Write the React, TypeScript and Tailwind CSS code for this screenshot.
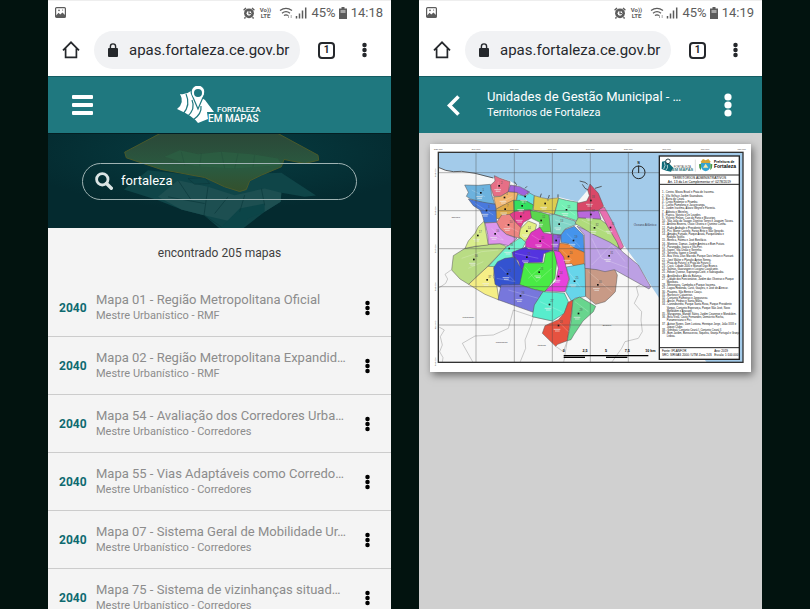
import type { ReactNode } from "react";

type Region = { fill: string; points: string };

const regions: Region[] = [
  { fill: "#b9dc84", points: "85,362 120,340 190,328 225,326 245,335 180,402 131,448 105,432 80,405" },
  { fill: "#d9ee8c", points: "120,340 130,318 150,295 160,275 178,258 182,285 190,330 150,334" },
  { fill: "#f5ee86", points: "131,448 180,402 225,362 228,384 210,398 205,425 215,450 222,495 180,478" },
  { fill: "#72f2cf", points: "190,394 245,335 290,305 302,322 290,345 262,352 262,372 230,378 210,395" },
  { fill: "#6cb2de", points: "119,150 160,151 196,148 200,178 209,208 185,206 165,200 137,192 124,184 130,172" },
  { fill: "#e66f86", points: "198,160 197,150 210,138 208,122 225,130 255,140 250,172 226,184 206,184" },
  { fill: "#4979dd", points: "130,192 165,200 212,208 215,262 178,263 172,240 165,225 145,212" },
  { fill: "#f2b56e", points: "206,186 228,184 250,170 279,171 272,202 232,214 214,222" },
  { fill: "#a062dd", points: "256,150 284,155 314,171 296,183 274,172 250,170" },
  { fill: "#62dfe4", points: "278,178 300,184 314,174 328,182 325,210 300,196 274,200" },
  { fill: "#ddcd50", points: "328,182 350,188 370,192 401,188 388,238 325,225" },
  { fill: "#dfab48", points: "214,222 232,212 266,195 268,230 242,248 215,251" },
  { fill: "#34e060", points: "266,196 300,196 325,210 322,226 290,224 267,230" },
  { fill: "#e43c8d", points: "254,238 268,230 316,224 320,248 296,262 286,280 268,258" },
  { fill: "#ee8582", points: "215,262 230,240 254,238 268,258 290,280 290,310 268,306 244,298 224,280" },
  { fill: "#74f0b5", points: "401,190 425,196 459,202 457,258 425,247 388,238" },
  { fill: "#5ad64e", points: "316,226 348,232 375,240 380,290 352,292 342,278 344,262 320,250" },
  { fill: "#82d6c8", points: "372,240 388,238 450,258 455,268 420,282 408,300 378,296" },
  { fill: "#e2ef82", points: "286,282 310,258 335,268 330,288 312,308 298,318 282,304" },
  { fill: "#db36c0", points: "302,320 318,292 345,277 356,294 382,298 384,346 340,344 302,336" },
  { fill: "#dd96ec", points: "180,264 215,262 224,280 244,298 276,310 250,332 225,326 190,328 188,298" },
  { fill: "#9058dc", points: "384,298 408,300 404,326 400,350 386,346" },
  { fill: "#4594ec", points: "408,300 420,284 448,274 475,300 478,352 444,338 432,326 408,322" },
  { fill: "#ee8538", points: "404,324 432,328 450,340 478,352 478,390 448,396 440,386 404,388 400,352" },
  { fill: "#5434df", points: "262,352 302,336 310,342 384,346 356,356 352,382 300,384 290,410 280,378 265,366" },
  { fill: "#3453d0", points: "206,398 218,380 240,370 270,366 282,390 298,412 286,448 280,475 240,465 210,448" },
  { fill: "#49eb45", points: "298,384 356,384 362,354 392,346 396,372 390,430 360,470 322,462 284,449" },
  { fill: "#e742dc", points: "386,346 404,350 416,366 432,432 420,470 360,468 392,440 400,400" },
  { fill: "#67d5ea", points: "424,396 478,386 482,398 482,484 450,490 440,500 422,470 434,432" },
  { fill: "#7777dc", points: "228,450 284,449 322,462 354,470 330,510 325,532 219,494" },
  { fill: "#58edcd", points: "354,470 418,474 430,500 418,535 382,558 322,545 328,510" },
  { fill: "#e65240", points: "430,502 444,495 440,532 427,617 398,628 392,634 352,595 360,572 400,554 418,534" },
  { fill: "#68d58e", points: "444,495 464,486 512,514 505,530 474,558 446,600 438,614 427,617 438,560" },
  { fill: "#c89a86", points: "480,397 516,404 554,398 570,405 577,420 571,470 560,482 540,500 512,508 482,484" },
  { fill: "#bca0e4", points: "456,274 482,284 520,290 560,310 592,350 640,390 677,455 672,462 568,404 540,410 516,404 480,400 478,300" },
  { fill: "#b0dc7c", points: "460,248 525,252 545,268 574,302 582,340 555,322 530,310 500,296 450,265" },
  { fill: "#b968dc", points: "457,228 520,226 528,252 460,248" },
  { fill: "#ea6fb0", points: "520,222 538,216 562,260 596,335 586,345 575,320 548,275" },
  { fill: "#d94868", points: "457,205 485,198 493,182 488,165 495,147 520,175 536,214 520,226 457,229" },
];

const markers = "167,173 222,152 184,226 238,187 300,184 360,205 240,222 291,212 287,244 250,269 424,224 348,256 402,267 305,288 345,318 210,296 158,301 393,316 445,316 430,364 305,366 247,416 342,411 400,424 448,438 286,482 373,508 400,571 460,535 518,449 552,362 508,278 497,196 497,238 556,277 146,373 186,434 252,340"
  .split(" ")
  .map((pair) => pair.split(",").map(Number));

const legend = [
  "1 - Centro, Moura Brasil e Praia de Iracema.",
  "2 - Vila Velha e Jardim Guanabara.",
  "3 - Barra do Ceará.",
  "4 - Cristo Redentor e Pirambu.",
  "5 - Carlito Pamplona e Jacarecanga.",
  "6 - Jardim Iracema, Álvaro Weyne e Floresta.",
  "7 - Aldeota e Meireles.",
  "8 - Papicu, Varjota e De Lourdes.",
  "9 - Vicente Pinzon, Cais do Porto e Mucuripe.",
  "10 - São João do Tauape, Dionísio Torres e Joaquim Távora.",
  "11 - Antônio Bezerra, Olavo Oliveira e Quintino Cunha.",
  "12 - Padre Andrade e Presidente Kennedy.",
  "13 - Pici, Monte Castelo, Farias Brito e São Gerardo.",
  "14 - Amadeu Furtado, Parque Araxá, Parquelândia e",
  "      Rodolfo Teófilo.",
  "15 - Benfica, Fátima e José Bonifácio.",
  "16 - Montese, Damas, Jardim América e Bom Futuro.",
  "17 - Parangaba, Itaoca e Vila Peri.",
  "18 - Itaperi, Vila União e Serrinha.",
  "19 - Serrinha, Itaperi e Dendê.",
  "20 - Boa Vista, Dias Macedo, Parque Dois Irmãos e Passaré.",
  "21 - José Walter e Planalto Ayrton Senna.",
  "22 - Praia do Futuro I e Praia do Futuro II.",
  "23 - Cocó, Cidade 2000 e Manuel Dias Branco.",
  "24 - Salinas, Guararapes e Luciano Cavalcante.",
  "25 - Edson Queiroz, Sapiranga/Coité, e Sabiaguaba.",
  "26 - Aerolândia e Alto da Balança.",
  "27 - Cidade dos Funcionários, Jardim das Oliveiras e Parque",
  "      Manibura.",
  "28 - Messejana, Cambeba e Parque Iracema.",
  "29 - Lagoa Redonda, Curió, Guajeru, e José de Alencar.",
  "30 - Paupina, São Bento e Coaçu.",
  "31 - Barroso e Cajazeiras.",
  "32 - Conjunto Palmeiras e Jangurussu.",
  "33 - Ancuri, Pedras e Santa Maria.",
  "34 - Canindezinho, Parque Santa Rosa, Parque Presidente",
  "      Vargas, Conjunto Esperança, Parque São José, Novo",
  "      Mondubim e Aracapé.",
  "35 - Maraponga, Manoel Sátiro, Jardim Cearense e Mondubim.",
  "36 - Bela Vista, Couto Fernandes, Demócrito Rocha,",
  "      Panamericano e Pici.",
  "37 - Autran Nunes, Dom Lustosa, Henrique Jorge, João XXIII e",
  "      Jóquei Clube.",
  "38 - Genibaú, Conjunto Ceará I, Conjunto Ceará II.",
  "39 - Bom Jardim, Bonsucesso, Siqueira, Granja Portugal e Granja",
  "      Lisboa.",
];

const maps = [
  ["Mapa 01 - Região Metropolitana Oficial", "Mestre Urbanístico - RMF"],
  ["Mapa 02 - Região Metropolitana Expandid…", "Mestre Urbanístico - RMF"],
  ["Mapa 54 - Avaliação dos Corredores Urba…", "Mestre Urbanístico - Corredores"],
  ["Mapa 55 - Vias Adaptáveis como Corredo…", "Mestre Urbanístico - Corredores"],
  ["Mapa 07 - Sistema Geral de Mobilidade Ur…", "Mestre Urbanístico - Corredores"],
  ["Mapa 75 - Sistema de vizinhanças situad…", "Mestre Urbanístico - Corredores"],
];

function Dots({ className }: { className: string }) {
  return (
    <svg viewBox="0 0 8 24" className={className} fill="currentColor" aria-hidden="true">
      <circle cx="4" cy="4" r="3.6" />
      <circle cx="4" cy="12" r="3.6" />
      <circle cx="4" cy="20" r="3.6" />
    </svg>
  );
}

function StatusBar({ time }: { time: string }) {
  return (
    <div className="flex h-6 shrink-0 items-center border-t border-[#eeeeee] pr-2 pl-[7px] text-[13px] text-[#5c5c5c]">
      <svg viewBox="0 0 11 11" className="size-[11px]" aria-hidden="true">
        <rect x="0.6" y="0.6" width="9.8" height="9.8" rx="1" fill="none" stroke="#5c5c5c" strokeWidth="1.2" />
        <path d="M1 8.5 3.6 5.8 5.2 7.4 7.5 5.4 10 8v2H1Z" fill="#5c5c5c" />
        <circle cx="4" cy="3.4" r="0.8" fill="#5c5c5c" />
        <circle cx="7.6" cy="3" r="0.6" fill="#5c5c5c" />
      </svg>
      <div className="ml-auto flex items-center gap-1">
        <svg viewBox="0 0 12 12" className="size-3" aria-hidden="true">
          <circle cx="6" cy="6.3" r="4.9" fill="#5c5c5c" />
          <path d="M.6 3.2 3 1M11.4 3.2 9 1M2.5 10.2 1.4 11.5M9.5 10.2l1.1 1.3" stroke="#5c5c5c" strokeWidth="1.4" />
          <circle cx="6" cy="6.3" r="2.4" fill="#fff" />
          <path d="M6 4v2.600h2.200" stroke="#5c5c5c" strokeWidth="1.2" fill="none" />
        </svg>
        <span className="flex w-3 flex-col items-center text-[6px] leading-[6px] font-bold">
          <span>Vo))</span>
          <span>LTE</span>
        </span>
        <svg viewBox="0 0 28 14" className="ml-1 h-[14px] w-7" fill="none" stroke="#5c5c5c" aria-hidden="true">
          <path d="M1 4.600Q7 .2 13 4.600M3 7.200q4-3 8 0M5 9.600q2-1.600 4 0" strokeWidth="1.3" />
          <path d="M9.500 9v3M12.200 9v3" stroke="#aaa" />
          <path d="M17.500 10v2.500M20.500 7.500v5M23.500 4.500v8M26.700 1.500v11" strokeWidth="1.500" />
        </svg>
        <span className="-mr-px">45%</span>
        <svg viewBox="0 0 8 12" className="h-3 w-2" aria-hidden="true">
          <path d="M2.500 0h3v1.500H8V12H0V1.500h2.500Z" fill="#5c5c5c" />
          <path d="M1.500 3h5v3h-5Z" fill="#a8a8a8" />
        </svg>
        <span>{time}</span>
      </div>
    </div>
  );
}

function BrowserBar() {
  return (
    <div className="flex h-[52px] shrink-0 items-center bg-white pr-[23px] pl-[14px] text-[#25282c]">
      <button type="button" aria-label="Início">
        <svg viewBox="0 0 18 18" className="size-[18px]" fill="none" stroke="currentColor" strokeWidth="1.7" aria-hidden="true">
          <path d="M1 9.300 9 1.300l8 8M3.600 7.500v8.900h10.800V7.500" />
        </svg>
      </button>
      <label className="ml-[14px] flex h-[38px] min-w-0 flex-1 items-center rounded-full bg-[#f1f2f4] pl-[14px]">
        <svg viewBox="0 0 10 14" className="h-[14px] w-[10px] shrink-0" aria-hidden="true">
          <rect y="5" width="10" height="9" rx="1" fill="currentColor" />
          <path d="M2.400 5.500V3.500a2.600 2.600 0 0 1 5.200 0v2" fill="none" stroke="currentColor" strokeWidth="1.4" />
        </svg>
        <input
          aria-label="Endereço"
          defaultValue="apas.fortaleza.ce.gov.br"
          className="ml-[11px] w-full min-w-0 bg-transparent text-[15px] outline-none"
        />
      </label>
      <button type="button" aria-label="Abas" className="ml-[18px] flex size-[17px] items-center justify-center rounded-[4px] border-2 border-current text-[10px] leading-none font-bold">
        1
      </button>
      <button type="button" aria-label="Menu do navegador" className="ml-[25px] flex w-2 justify-center">
        <Dots className="h-4 w-[5px]" />
      </button>
    </div>
  );
}

function Phone({ time, header, children }: { time: string; header: ReactNode; children: ReactNode }) {
  return (
    <section className="flex min-w-0 flex-1 flex-col overflow-hidden bg-white">
      <StatusBar time={time} />
      <BrowserBar />
      <header className="flex h-[57px] shrink-0 items-center border-t border-[#145c62] bg-[#1f787f] text-white">{header}</header>
      {children}
    </section>
  );
}

function Logo() {
  return (
    <svg viewBox="0 0 86 38" className="h-[38px] w-[86px]" role="img" aria-label="Fortaleza em Mapas">
      <path d="M3 8Q9 9 14 5L28 14 37 26 30 26 31 33 21 37Q16 30 0 23Q8 17 3 8Z" fill="#fff" />
      <path d="M9 8q5 11-3 20M15 14q4 9-5 17M24 20q1 8-8 14" fill="none" stroke="#1f787f" strokeWidth="1.2" />
      <path d="M21 23 15 9a6.800 6.800 0 1 1 12 0Z" fill="#fff" stroke="#1f787f" strokeWidth="1.2" />
      <circle cx="21" cy="7" r="5" fill="#1f787f" stroke="#fff" strokeWidth="2" />
      <text x="40" y="26" fontSize="8" fontFamily="Roboto, sans-serif" fontWeight="500" fill="#fff">FORTALEZA</text>
      <text x="31" y="36" fontSize="10" fontFamily="Roboto, sans-serif" fontWeight="500" fill="#fff">EM MAPAS</text>
    </svg>
  );
}

function SearchBackdrop() {
  return (
    <svg viewBox="0 0 1029 285" preserveAspectRatio="xMidYMid slice" className="absolute inset-0 size-full" aria-hidden="true">
      <defs>
        <radialGradient id="glow" cx="50%" cy="20%" r="60%">
          <stop offset="0" stopColor="#073d42" />
          <stop offset="1" stopColor="#042a2f" />
        </radialGradient>
        <linearGradient id="olive" x1="0" y1="0" x2="0" y2="1">
          <stop offset="0" stopColor="#2b4838" />
          <stop offset="0.6" stopColor="#2a5a40" />
          <stop offset="1" stopColor="#34502c" />
        </linearGradient>
      </defs>
      <rect width="1029" height="285" fill="url(#glow)" />
      <path d="M228 168 300 110 480 130 640 120 700 118 804 186 770 190 700 178 698 205 650 235 585 285H515L468 245 400 228 330 200Z" fill="#0f4548" />
      <path d="M330 190 390 140 480 160 560 185 650 165 700 178 698 205 650 235 600 250 540 262 468 245 400 228Z" fill="#1d4f51" />
      <path d="M540 260 575 225 650 210 650 235 600 255 585 285H515Z" fill="#0c4548" />
      <path d="M420 135 470 132 485 150 440 152ZM390 140 430 200M480 160 468 245 520 280M540 190 500 240M590 185 575 235M640 165 650 215M360 190 470 210" fill="none" stroke="#0a383b" strokeWidth="2" />
      <path d="M336 0 230 56 235 73 340 108 470 132 530 160 575 174 595 168 605 142 640 125 700 100 708 78 770 90 812 80 810 65 690 0Z" fill="url(#olive)" stroke="#4a5a2a" strokeWidth="3" />
      <path d="M350 70 395 50 450 62 520 55 610 62 690 75 700 95 560 105 440 98Z" fill="#2b6545" opacity=".5" />
      <path d="M400 55 410 95M460 60 455 98M520 55 530 104M570 60 560 105M620 65 615 100" stroke="#234d3b" strokeWidth="2" opacity=".6" />
    </svg>
  );
}

function ListScreen() {
  return (
    <>
      <div className="relative flex h-[95px] shrink-0 items-center justify-center border-t border-[#041f23] bg-[#042a2f]">
        <SearchBackdrop />
        <label className="relative mx-[34px] flex h-[37px] w-full items-center rounded-full border border-[#9fb3b3] pl-3">
          <svg viewBox="0 0 18 18" className="size-[18px] shrink-0" fill="none" stroke="#dbe4e4" aria-hidden="true">
            <circle cx="7.300" cy="7.300" r="5.700" strokeWidth="2.800" />
            <path d="m11.500 11.500 4.800 4.800" strokeWidth="3.400" strokeLinecap="round" />
          </svg>
          <input aria-label="Buscar mapas" defaultValue="fortaleza" className="ml-2 w-full min-w-0 bg-transparent text-[13px] text-white outline-none" />
        </label>
      </div>
      <div className="flex-1 bg-[#f4f4f4]">
        <p className="py-[17px] text-center text-[12px] leading-[17px] text-[#404040]">encontrado 205 mapas</p>
        <ul>
          {maps.map(([title, group]) => (
            <li key={title} className="flex h-[58px] items-center border-b border-[#cccccc] pr-3 pl-[11px]">
              <span className="w-[37px] shrink-0 text-[12px] font-bold text-[#0e6a70]">2040</span>
              <a href="#mapa" className="min-w-0 flex-1 text-[#8c8c8c]">
                <span className="block truncate text-[13px] leading-4">{title}</span>
                <span className="block truncate text-[11px] leading-4">{group}</span>
              </a>
              <button type="button" aria-label={`Opções de ${title}`} className="flex w-6 justify-center text-black">
                <Dots className="h-4 w-[5px]" />
              </button>
            </li>
          ))}
        </ul>
      </div>
    </>
  );
}

function MapSheet() {
  return (
    <svg viewBox="15 27 963 684" className="block h-auto w-full bg-white shadow-[2px_3px_8px_rgba(0,0,0,0.5)]" fontFamily="'Liberation Sans', sans-serif" role="img" aria-label="Mapa das Unidades de Gestão Municipal">
      <rect x="15" y="27" width="963" height="684" fill="#fff" />
      <rect x="40" y="52" width="914" height="630" fill="#f7f7f7" />
      <path d="M40 52V97L62 106 85 110 110 109 150 115 180 124 205 129 215 125 255 138 284 155 325 182 370 192 401 186 458 200 488 165 495 147 538 214 596 330 640 390 682 458 710 500 770 585 845 682H954V52Z" fill="#a3cbea" />
      <path d="M40 97 62 106 85 110 110 109 150 115 205 129M488 148 480 142 464 138M490 165 480 160 472 148M510 160 530 154M268 140l6 8-2 8M300 160l6-6M345 188l4-12M370 190l3-10M399 188v-10" fill="none" stroke="#444" strokeWidth="2.500" />
      <g fill="none" stroke="#999" strokeWidth="1.500">
        <path d="M78 405 60 418 68 432 62 445 40 460M40 575 58 585 46 605 52 630 44 650 54 668 52 682M144 682 112 625 150 603 205 600 250 580 265 525 325 545 318 570 300 615 302 640 285 682M322 545 382 558 M392 634 415 650 427 617 416 682" />
        <path d="M677 455 650 447 634 456 640 480 628 505 650 530 648 555 652 590 640 610 600 620 590 640 560 682" />
      </g>
      <g stroke="#555" strokeWidth="1.500" strokeLinejoin="round">
        {regions.map((r) => (
          <polygon key={r.points} points={r.points} fill={r.fill} />
        ))}
      </g>
      <g fill="none" stroke="#fff" strokeWidth="1" opacity=".6">
        <path d="M140 165 180 185M220 140 215 170M150 205 205 240M230 200 262 185M240 270 280 290M200 280 235 315 215 310M110 370 170 350 220 345M130 400 175 380M225 395 270 440 215 430M300 395 335 440 380 400M310 430 350 395M410 345 440 375M430 410 470 460M250 465 340 490M345 500 410 530M400 560 430 590M450 500 490 530M490 410 560 470M500 310 530 370 610 400M500 390 560 330 600 380M470 255 560 300M410 210 450 240M390 255 440 270M425 295 465 335M320 300 375 335M270 355 340 370" />
      </g>
      <g fontSize="8" textAnchor="middle">
        {markers.map(([x, y], i) => (
          <g key={`${x}-${y}`}>
            <rect x={x - 2} y={y - 2} width="5" height="5" fill="#111" />
            <text x={x + 8} y={y - 6} fill="#555">{i + 1}</text>
            <path d={`M${x - 14} ${y + 12}h20M${x - 10} ${y + 17}h14`} stroke="#eee" strokeWidth="2.500" opacity=".8" />
          </g>
        ))}
      </g>
      <g stroke="#4a4a4a" strokeWidth="1.500" opacity=".8">
        <path d="M153 52V682M268 52V682M382 52V682M496 52V682M610 52V682M40 113H702M40 227H702M40 341H702M40 455H702M40 570H702" />
      </g>
      <rect x="40" y="52" width="914" height="630" fill="none" stroke="#333" strokeWidth="4" />
      <g fontSize="7" fill="#333" textAnchor="middle">
        {[40, 153, 268, 382, 496, 610, 725, 840, 950].map((x, i) => (
          <text key={x} x={x} y="46">{`${53 + i}0.000`}</text>
        ))}
        {[113, 227, 341, 455, 570, 680].map((y, i) => (
          <text key={y} x="34" y={y} transform={`rotate(-90 34 ${y})`}>{`${959 - i}.000`}</text>
        ))}
        <text x="92" y="250">Caucaia</text>
        <text x="130" y="549">Maracanaú</text>
        <text x="230" y="624">Maracanaú</text>
        <text x="350" y="634">Itaitinga</text>
        <text x="546" y="574">Eusébio</text>
      </g>
      <text x="660" y="273" fontSize="9" fill="#445" textAnchor="middle">Oceano Atlântico</text>
      <circle cx="641" cy="112" r="19" fill="none" stroke="#222" strokeWidth="3" />
      <path d="M641 92v22" stroke="#222" strokeWidth="3" />
      <text x="641" y="88" fontSize="9" fontWeight="bold" textAnchor="middle">N</text>
      <path d="M416 662H670M416 667h64M543 667h64" stroke="#000" strokeWidth="4" />
      <g fontSize="11" fontWeight="bold" textAnchor="middle">
        <text x="416" y="652">0</text>
        <text x="480" y="652">2,5</text>
        <text x="543" y="652">5</text>
        <text x="607" y="652">7,5</text>
        <text x="676" y="652">10 km</text>
      </g>
      <rect x="703" y="63" width="240" height="610" fill="#fff" stroke="#222" strokeWidth="4" />
      <path d="M703 120H943M703 148H943M703 638H943" stroke="#222" strokeWidth="3" />
      <path d="M811 74v36" stroke="#ccc" strokeWidth="2" />
      <path d="M711 80 724 77 745 98 738 110 724 107 710 102Z" fill="#0e6a78" />
      <circle cx="729" cy="79" r="7" fill="#fff" stroke="#27454c" strokeWidth="3" />
      <path d="M718 82q5 9-2 20M727 90q3 9-4 15" stroke="#fff" strokeWidth="2" fill="none" />
      <text x="746" y="98" fontSize="9" fill="#555">FORTALEZA</text>
      <text x="741" y="109" fontSize="12" fontWeight="bold" fill="#34787e">EM MAPAS</text>
      <path d="M827 80 834 72 842 76 850 72 857 80 853 86H831Z" fill="#d6a638" />
      <path d="M828 84h28v12q-4 11-14 13-10-2-14-13Z" fill="#35a3d0" />
      <path d="M822 88l6-2v20q-7-6-6-18ZM862 88l-6-2v20q7-6 6-18Z" fill="#4a9a48" />
      <path d="M834 98l8-12 8 12Z" fill="#f4e7a8" />
      <text x="867" y="83" fontSize="10" fontWeight="bold">Prefeitura de</text>
      <text x="867" y="98" fontSize="15" fontWeight="bold">Fortaleza</text>
      <g fontSize="10" textAnchor="middle">
        <text x="823" y="131">TERRITÓRIOS ADMINISTRATIVOS</text>
        <text x="823" y="143">Art. 13 da Lei Complementar nº 0278/2019</text>
      </g>
      <g fontSize="8" fill="#111">
        {legend.map((line, i) => (
          <text key={line} x={line.startsWith(" ") ? 725 : 711} y={Math.round(175 + i * 9.6)}>{line.trim()}</text>
        ))}
      </g>
      <g fontSize="9">
        <text x="711" y="650">Fonte: IPLANFOR</text>
        <text x="868" y="650">Ano: 2019</text>
        <text x="711" y="664">SRC: SIRGAS 2000 / UTM Zona 24S</text>
        <text x="868" y="664">Escala: 1:100.000</text>
      </g>
    </svg>
  );
}

export default function App() {
  return (
    <main className="flex h-screen gap-7 overflow-hidden bg-[#02130f] px-12 font-['Roboto',sans-serif]">
      <Phone
        time="14:18"
        header={
          <>
            <button type="button" aria-label="Menu" className="ml-6 flex w-[21px] flex-col gap-1">
              <span className="h-1 rounded-[1px] bg-white" />
              <span className="h-1 rounded-[1px] bg-white" />
              <span className="h-1 rounded-[1px] bg-white" />
            </button>
            <div className="mr-[45px] flex flex-1 justify-center">
              <Logo />
            </div>
          </>
        }
      >
        <ListScreen />
      </Phone>
      <Phone
        time="14:19"
        header={
          <>
            <button type="button" aria-label="Voltar" className="ml-7">
              <svg viewBox="0 0 13 21" className="h-[21px] w-[13px]" fill="none" stroke="currentColor" strokeWidth="3.600" aria-hidden="true">
                <path d="M11.500 1.500 2.500 10.500l9 9" />
              </svg>
            </button>
            <div className="ml-[27px] min-w-0">
              <h1 className="truncate text-[13px] leading-4">Unidades de Gestão Municipal - …</h1>
              <p className="text-[11px] leading-4">Territorios de Fortaleza</p>
            </div>
            <button type="button" aria-label="Opções do mapa" className="mr-[30px] ml-auto">
              <Dots className="h-6 w-2" />
            </button>
          </>
        }
      >
        <div className="flex-1 bg-[#d0d0d0] px-[11px] pt-[11px]">
          <MapSheet />
        </div>
      </Phone>
    </main>
  );
}
